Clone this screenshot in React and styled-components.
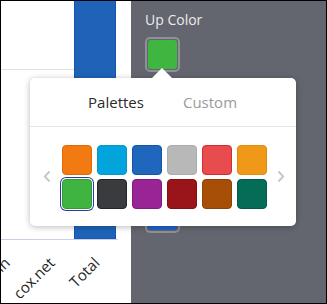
import React from 'react';
import styled, { createGlobalStyle } from 'styled-components';

const GlobalStyle = createGlobalStyle`
  html, body {
    margin: 0;
    padding: 0;
    background: #ffffff;
  }
  body {
    font-family: "Open Sans", "Liberation Sans", sans-serif;
  }
`;

const Frame = styled.div`
  position: relative;
  width: 327px;
  height: 304px;
  box-sizing: border-box;
  border: 1px solid #000;
  display: flex;
  overflow: hidden;
`;

const ChartArea = styled.div`
  position: relative;
  width: 130px;
  height: 100%;
  background: #fff;
  flex-shrink: 0;
  overflow: hidden;
`;

const AxisLabel = styled.span`
  position: absolute;
  right: ${p => 130 - p.$x}px;
  top: ${p => p.$y - 18}px;
  font-size: 15px;
  line-height: 18px;
  color: #1e1e1e;
  white-space: nowrap;
  transform: rotate(-45deg);
  transform-origin: 100% 100%;
`;

const SidePanel = styled.div`
  flex: 1;
  background: #63666e;
  padding: 9px 0 0 14px;
  display: flex;
  flex-direction: column;
`;

const FieldLabel = styled.div`
  color: #ececec;
  font-size: 14px;
  line-height: 19px;
  margin-top: ${p => p.$top || 0}px;
`;

const ColorButton = styled.div`
  margin-top: 8px;
  width: 35px;
  height: 35px;
  box-sizing: border-box;
  border: 2px solid #8f9197;
  border-radius: 5px;
  padding: 1px;
  background: #63666e;
  div {
    width: 100%;
    height: 100%;
    border-radius: 3px;
    background: ${p => p.$color};
  }
`;

const Popover = styled.div`
  position: absolute;
  left: 29px;
  top: 77px;
  width: 266px;
  height: 148px;
  background: #fff;
  border-radius: 5px;
  box-shadow: 0 1px 6px rgba(0, 0, 0, 0.28);
  display: flex;
  flex-direction: column;

  &::before {
    content: '';
    position: absolute;
    left: 122px;
    top: -10px;
    border-left: 10px solid transparent;
    border-right: 10px solid transparent;
    border-bottom: 10px solid #fff;
  }
`;

const Tabs = styled.div`
  height: 48px;
  display: flex;
  justify-content: center;
  align-items: center;
  border-bottom: 1px solid #e6e6e6;
`;

const Tab = styled.div`
  width: 94px;
  text-align: center;
  font-size: 15px;
  color: ${p => (p.$active ? '#2b2b2b' : '#9a9a9a')};
`;

const PaletteBody = styled.div`
  flex: 1;
  display: flex;
  align-items: center;
  justify-content: space-between;
  padding: 0 10px 0 12px;
`;

const Chevron = styled.div`
  width: 10px;
  display: flex;
  justify-content: center;
  color: #c8c8c8;
`;

const Grid = styled.div`
  display: grid;
  grid-template-columns: repeat(6, 30px);
  grid-auto-rows: 30px;
  gap: 4px 5px;
`;

const Swatch = styled.div`
  box-sizing: border-box;
  border-radius: 4px;
  background: ${p => p.$color};
  border: 1px solid ${p => p.$edge};
  box-shadow: ${p => (p.$selected ? '0 0 0 1px #fff, 0 0 0 2px #2d39a6' : 'none')};
`;

const colors = [
  ['#f27a12', '#e26a05'],
  ['#02a4dc', '#0896c8'],
  ['#1f66bd', '#1552a8'],
  ['#b8b8b8', '#ababab'],
  ['#e74c4e', '#d92a2c'],
  ['#f09918', '#e38b0a'],
  ['#40b440', '#2e9f2e'],
  ['#3a3b3f', '#222326'],
  ['#992496', '#85197f'],
  ['#9a1519', '#880d10'],
  ['#a74f07', '#8f4203'],
  ['#056c58', '#02584a'],
];

const ChevronIcon = ({ dir }) => (
  <svg width="8" height="13" viewBox="0 0 8 13">
    <path
      d={dir === 'left' ? 'M6.5 1.5 L1.8 6.5 L6.5 11.5' : 'M1.5 1.5 L6.2 6.5 L1.5 11.5'}
      fill="none"
      stroke="currentColor"
      strokeWidth="2"
    />
  </svg>
);

// axis labels, anchored at the end of the text
const labels = [
  { x: 12, text: 'Domain' },
  { x: 57, text: 'cox.net' },
  { x: 102, text: 'Total' },
];

const Bars = () => (
  <svg width="130" height="302" viewBox="0 0 130 302">
    <line x1="0" y1="68.5" x2="73" y2="68.5" stroke="#e0e0e0" />
    <rect x="73" y="0" width="42" height="238" fill="#1f63b9" />
    <rect x="73.5" y="-1" width="41" height="239" fill="none" stroke="#1a55a8" />
    <line x1="0" y1="238.5" x2="117" y2="238.5" stroke="#c9d0e2" />
  </svg>
);

export default function App() {
  return (
    <>
      <GlobalStyle />
      <Frame>
        <ChartArea>
          <Bars />
          {labels.map(l => (
            <AxisLabel key={l.text} $x={l.x} $y={265}>{l.text}</AxisLabel>
          ))}
        </ChartArea>
        <SidePanel>
          <FieldLabel>Up Color</FieldLabel>
          <ColorButton $color="#3fb63f"><div /></ColorButton>
          <FieldLabel $top={99}>Down Color</FieldLabel>
          <ColorButton $color="#1f63c6"><div /></ColorButton>
        </SidePanel>
        <Popover>
          <Tabs>
            <Tab $active>Palettes</Tab>
            <Tab>Custom</Tab>
          </Tabs>
          <PaletteBody>
            <Chevron><ChevronIcon dir="left" /></Chevron>
            <Grid>
              {colors.map(([c, e], i) => (
                <Swatch key={i} $color={c} $edge={e} $selected={i === 6} />
              ))}
            </Grid>
            <Chevron><ChevronIcon dir="right" /></Chevron>
          </PaletteBody>
        </Popover>
      </Frame>
    </>
  );
}
